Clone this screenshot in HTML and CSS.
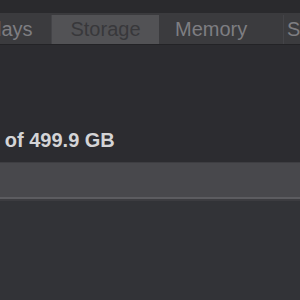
FILE: index.html
```html
<!DOCTYPE html>
<html>
<head>
<meta charset="utf-8">
<link rel="stylesheet" href="styles.css">
</head>
<body>
<div class="titlebar"></div>
<div class="tabs">
  <div class="tab tab-displays">Displays</div>
  <div class="tab tab-selected">Storage</div>
  <div class="tab tab-memory">Memory</div>
  <div class="tab tab-support">Support</div>
</div>
<div class="content">
  <p class="capacity">n of 499.9 GB</p>
  <div class="bar"></div>
</div>
</body>
</html>
```
FILE: styles.css
```css
html, body {
  margin: 0;
  padding: 0;
}
body {
  width: 300px;
  height: 300px;
  overflow: hidden;
  background: #323337;
  font-family: "Liberation Sans", Arial, sans-serif;
}
.titlebar {
  height: 13px;
  background: #2a2a2d;
}
.tabs {
  display: flex;
  height: 32px;
  padding: 2px 0 0 0;
  box-sizing: border-box;
  background: #3b3b3e;
  border-bottom: 1px solid #232326;
  margin-left: -58px;
  white-space: nowrap;
}
.tab {
  flex: none;
  height: 29px;
  line-height: 29px;
  font-size: 20px;
  color: #7e7e82;
  text-align: center;
  border-right: 1px solid #444448;
  box-sizing: border-box;
}
.tab-displays { width: 110px; text-align: left; padding-left: 15px; }
.tab-selected {
  width: 108px;
  background: #525255;
  color: #38383b;
  border-right: 1px solid #3b3b3e;
}
.tab-memory {
  width: 124px;
  text-align: left;
  padding-left: 15px;
}
.tab-support { width: 80px; text-align: left; padding-left: 3px; }
.content {
  background: #2c2c30;
  padding-top: 85px;
}
.capacity {
  margin: 0 0 12px -13px;
  font-size: 20px;
  font-weight: bold;
  color: #d4d4d6;
  height: 20px;
  line-height: 20px;
}
.bar {
  height: 34px;
  background: #48484c;
  border-top: 1px solid #3e3e42;
  border-bottom: 2px solid #5c5c60;
  box-shadow: 0 2px 0 #3c3c40;
}
```
